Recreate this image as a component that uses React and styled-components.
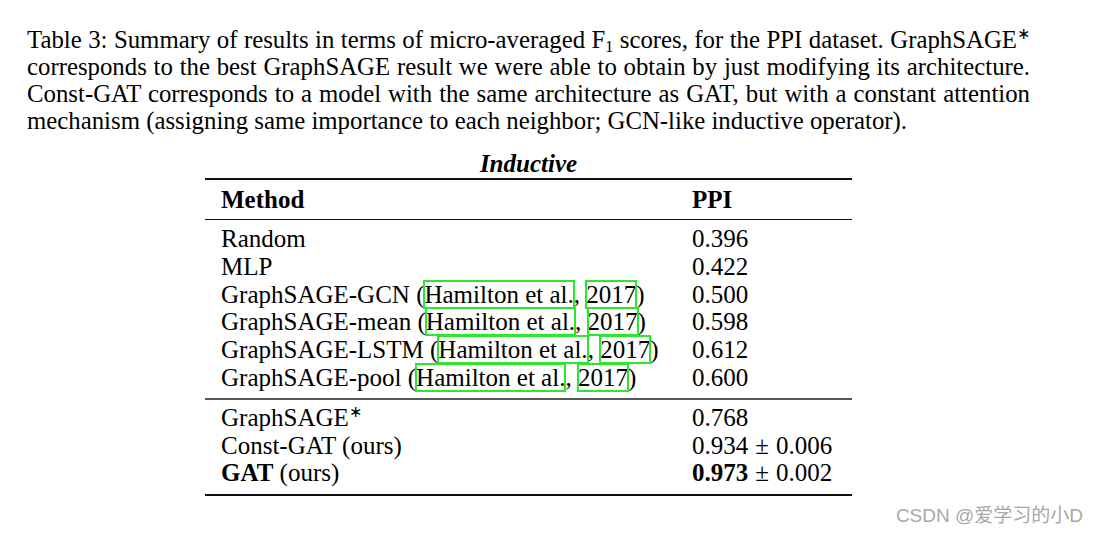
import styled, { createGlobalStyle } from "styled-components";

const GlobalStyle = createGlobalStyle`
  html, body {
    margin: 0;
    padding: 0;
    background: #ffffff;
  }
  body {
    font-family: "Liberation Serif", "Times New Roman", serif;
    color: #000;
  }
`;

const rows = [
  { name: "Random", value: "0.396" },
  { name: "MLP", value: "0.422" },
  { name: "GraphSAGE-GCN", cite: true, value: "0.500" },
  { name: "GraphSAGE-mean", cite: true, value: "0.598" },
  { name: "GraphSAGE-LSTM", cite: true, value: "0.612" },
  { name: "GraphSAGE-pool", cite: true, value: "0.600" },
];

const Page = styled.div`
  width: 1098px;
  height: 534px;
  position: relative;
  overflow: hidden;
`;

const Caption = styled.div`
  width: 1003px;
  margin: 26px 0 0 27px;
  font-size: 24.8px;
  line-height: 27px;
`;

const CaptionLine = styled.div`
  text-align: ${(p) => (p.$last ? "left" : "justify")};
  text-align-last: ${(p) => (p.$last ? "left" : "justify")};
  white-space: nowrap;
`;

const Sub = styled.sub`
  font-size: 16px;
  vertical-align: -4px;
  line-height: 0;
`;

const Sup = styled.sup`
  font-size: 16px;
  vertical-align: 9px;
  line-height: 0;
`;

const TableWrap = styled.div`
  width: 647px;
  margin: 16px 0 0 205px;
  font-size: 25px;
`;

const Title = styled.div`
  text-align: center;
  font-weight: bold;
  font-style: italic;
  line-height: 27px;
  height: 28px;
`;

const Section = styled.div`
  display: grid;
  grid-template-columns: 471px 1fr;
  padding: ${(p) => p.$pad || "0"} 0 ${(p) => p.$padBottom || "0"} 16px;
  border-top: ${(p) => p.$rule || "none"};
  border-bottom: ${(p) => p.$ruleBottom || "none"};
  line-height: 27.8px;
`;

const HeadCell = styled.div`
  font-weight: bold;
  line-height: 39px;
`;

const Cell = styled.div`
  white-space: nowrap;
`;

const Cite = styled.span`
  outline: 2px solid #2fe62f;
  outline-offset: -1px;
`;

const Bold = styled.b`
  font-weight: bold;
`;

const PlusMinus = styled.span`
  margin: 0 7px;
`;

const Watermark = styled.div`
  position: absolute;
  right: 15px;
  bottom: 7px;
  font-family: "Liberation Sans", "Noto Sans CJK SC", sans-serif;
  font-size: 19px;
  color: #a8a8a8;
`;

const Reference = () => (
  <>
    (<Cite>Hamilton et al.</Cite>, <Cite>2017</Cite>)
  </>
);

export default function App() {
  return (
    <Page>
      <GlobalStyle />
      <Caption>
        <CaptionLine>
          Table 3: Summary of results in terms of micro-averaged F<Sub>1</Sub> scores, for the PPI
          dataset. GraphSAGE<Sup>∗</Sup>
        </CaptionLine>
        <CaptionLine>
          corresponds to the best GraphSAGE result we were able to obtain by just modifying its
          architecture.
        </CaptionLine>
        <CaptionLine>
          Const-GAT corresponds to a model with the same architecture as GAT, but with a constant
          attention
        </CaptionLine>
        <CaptionLine $last>
          mechanism (assigning same importance to each neighbor; GCN-like inductive operator).
        </CaptionLine>
      </Caption>

      <TableWrap>
        <Title>Inductive</Title>
        <Section $rule="2px solid #111" $ruleBottom="1px solid #111">
          <HeadCell>Method</HeadCell>
          <HeadCell>PPI</HeadCell>
        </Section>
        <Section $pad="5px" $padBottom="6px" $ruleBottom="2px solid #555">
          {rows.map((r) => (
            <>
              <Cell key={r.name}>
                {r.name}
                {r.cite && (
                  <>
                    {" "}
                    <Reference />
                  </>
                )}
              </Cell>
              <Cell key={r.name + "-v"}>{r.value}</Cell>
            </>
          ))}
        </Section>
        <Section $pad="4px" $padBottom="7px" $ruleBottom="2px solid #111">
          <Cell>
            GraphSAGE<Sup>∗</Sup>
          </Cell>
          <Cell>0.768</Cell>
          <Cell>Const-GAT (ours)</Cell>
          <Cell>
            0.934<PlusMinus>±</PlusMinus>0.006
          </Cell>
          <Cell>
            <Bold>GAT</Bold> (ours)
          </Cell>
          <Cell>
            <Bold>0.973</Bold>
            <PlusMinus>±</PlusMinus>0.002
          </Cell>
        </Section>
      </TableWrap>

      <Watermark>CSDN @爱学习的小D</Watermark>
    </Page>
  );
}
